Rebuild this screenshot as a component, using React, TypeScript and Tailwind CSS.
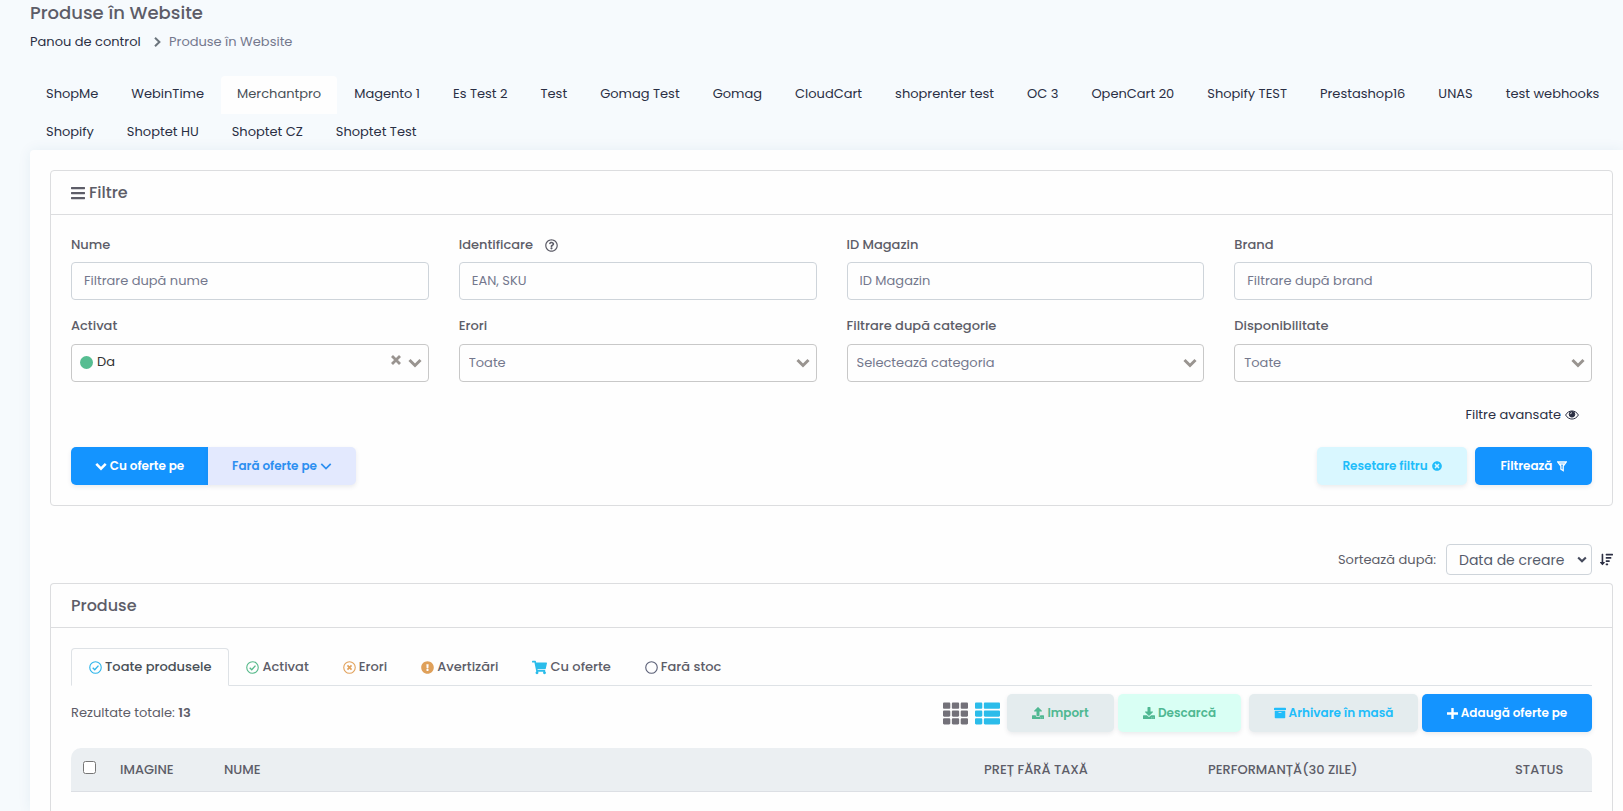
import type { ReactNode } from 'react';
import { FaBars, FaDownload, FaRegQuestionCircle, FaShoppingCart, FaSortAmountDown, FaTh, FaThList, FaUpload, FaArchive, FaTimesCircle, FaExclamationCircle } from 'react-icons/fa';

const shops = [
  'ShopMe', 'WebinTime', 'Merchantpro', 'Magento 1', 'Es Test 2', 'Test', 'Gomag Test', 'Gomag', 'CloudCart', 'shoprenter test',
  'OC 3', 'OpenCart 20', 'Shopify TEST', 'Prestashop16', 'UNAS', 'test webhooks', 'Shopify', 'Shoptet HU', 'Shoptet CZ', 'Shoptet Test',
];
const activeShop = 'Merchantpro';

const textFilters = [
  { id: 'name', label: 'Nume', placeholder: 'Filtrare după nume' },
  { id: 'identifier', label: 'Identificare', placeholder: 'EAN, SKU', help: true },
  { id: 'shop-id', label: 'ID Magazin', placeholder: 'ID Magazin' },
  { id: 'brand', label: 'Brand', placeholder: 'Filtrare după brand' },
];

const selectFilters = [
  { id: 'active', label: 'Activat', value: 'Da', selected: true },
  { id: 'errors', label: 'Erori', value: 'Toate' },
  { id: 'category', label: 'Filtrare după categorie', value: 'Selectează categoria' },
  { id: 'availability', label: 'Disponibilitate', value: 'Toate' },
];

function RingIcon({ className, children }: { className: string; children?: ReactNode }) {
  return (
    <svg viewBox="0 0 14 14" fill="none" stroke="currentColor" strokeWidth="1.2" className={`size-[13px] shrink-0 ${className}`}>
      <circle cx="7" cy="7" r="6.2" />
      {children}
    </svg>
  );
}

const productTabs = [
  { label: 'Toate produsele', active: true, icon: <RingIcon className="text-[#2fb5ea]"><path d="M4 7.2 6.2 9.3 10.2 5" strokeWidth="1.5" /></RingIcon> },
  { label: 'Activat', icon: <RingIcon className="text-[#56b98a]"><path d="M4 7.2 6.2 9.3 10.2 5" strokeWidth="1.5" /></RingIcon> },
  { label: 'Erori', icon: <RingIcon className="text-[#e2a25c]"><path d="m4.8 4.8 4.4 4.4M9.2 4.8 4.8 9.2" strokeWidth="1.8" /></RingIcon> },
  { label: 'Avertizări', icon: <FaExclamationCircle className="size-[13px] shrink-0 text-[#dfa05a]" /> },
  { label: 'Cu oferte', icon: <FaShoppingCart className="size-[15px] shrink-0 text-[#2bbcea]" /> },
  { label: 'Fară stoc', icon: <RingIcon className="text-[#5a5f76]" /> },
];

function Chevron({ className }: { className: string }) {
  return (
    <svg viewBox="0 0 14 10" fill="none" stroke="currentColor" className={className}>
      <path d="m1.5 2 5.5 5.5L12.5 2" />
    </svg>
  );
}

function Card({ title, className = '', children }: { title: ReactNode; className?: string; children: ReactNode }) {
  return (
    <section className={`rounded-[4px] border border-[#dcdddf] ${className}`}>
      <h2 className="flex h-[44px] items-center gap-[3px] border-b border-[#dcdddf] px-5 text-base font-medium">{title}</h2>
      {children}
    </section>
  );
}

const button = 'flex h-[38px] items-center justify-center gap-[3px] text-[12px] font-semibold shadow-[0_2px_4px_rgba(60,70,90,0.1)]';

export default function App() {
  return (
    <div className="flex min-h-screen flex-col bg-[#f6fafd] pl-[30px] font-['Poppins','Inter',sans-serif] text-[13px] text-[#5d5d68]">
      <h1 className="h-[27px] text-[18px] leading-[26px] font-medium">Produse în Website</h1>
      <nav className="flex h-[29px] items-center">
        <a href="#" className="w-[111px] text-[#2c3044]">Panou de control</a>
        <svg viewBox="0 0 7 10" fill="none" stroke="currentColor" strokeWidth="2" className="mr-2 ml-[13px] h-[10px] w-[7px] text-[#6c757d]">
          <path d="m1 .8 4.400 4.200L1 9.200" />
        </svg>
        <span className="text-[#74788d]">Produse în Website</span>
      </nav>

      <ul className="-mb-0.5 flex flex-wrap gap-x-px pt-5">
        {shops.map((name) => (
          <li key={name}>
            <a href="#" className={`flex h-[38px] items-center px-4 pb-0.5 leading-5 whitespace-nowrap ${name === activeShop ? 'rounded-t-[4px] bg-[#fefefe] text-[#495057]' : 'text-[#2a2f44]'}`}>{name}</a>
          </li>
        ))}
      </ul>

      <main className="flex grow flex-col rounded-tl-[4px] bg-[#fefefe] pt-5 pr-[10px] pl-5 shadow-[0_0_14px_rgba(18,90,130,0.07)]">
        <Card title={<><FaBars className="-ml-px size-4" /> Filtre</>}>
          <form className="px-5 pb-5" onSubmit={(e) => e.preventDefault()}>
            <div className="grid grid-cols-4 gap-x-[30px]">
              {textFilters.map((f) => (
                <div key={f.id} className="pt-5">
                  <label htmlFor={f.id} className="flex h-5 items-center gap-3 font-medium">
                    {f.label}
                    {f.help && <FaRegQuestionCircle className="size-[13px]" />}
                  </label>
                  <input id={f.id} placeholder={f.placeholder} className="mt-[7px] h-[38px] w-full rounded-[4px] border border-[#ced4da] px-3 placeholder:text-[#74788d]" />
                </div>
              ))}
              {selectFilters.map((f) => (
                <div key={f.id} className="pt-4">
                  <label htmlFor={f.id} className="flex h-5 items-center font-medium">{f.label}</label>
                  <div className="relative mt-2">
                    <select id={f.id} className={`h-[38px] w-full appearance-none rounded-[4px] border border-[#c8c8c8] pr-12 ${f.selected ? 'pb-0.5 pl-[25px] text-[#333]' : 'pl-[9px] text-[#74788d]'}`}>
                      <option>{f.value}</option>
                    </select>
                    {f.selected && <span className="absolute top-3 left-[9px] size-[13px] rounded-full bg-[#56bd91]" />}
                    {f.selected && (
                      <button type="button" aria-label="Șterge" className="absolute top-[11px] right-7 text-[#999490]">
                        <svg viewBox="0 0 10 10" stroke="currentColor" strokeWidth="2.8" className="size-[10px]"><path d="m1 1 8 8M9 1 1 9" /></svg>
                      </button>
                    )}
                    <Chevron className="pointer-events-none absolute top-[14px] right-[7px] h-[10px] w-[14px] stroke-3 text-[#999490]" />
                  </div>
                </div>
              ))}
            </div>

            <div className="mt-[23px] flex justify-end pr-[13px]">
              <a href="#" className="flex h-5 items-center gap-1 text-[#2c3044]">
                Filtre avansate
                <svg viewBox="0 0 14 10" className="h-[10px] w-[14px]" fill="none" stroke="currentColor">
                  <path d="M.6 5C3.600-.4 10.400-.4 13.400 5 10.400 10.400 3.600 10.400.6 5Z" />
                  <circle cx="7" cy="4.300" r="2.800" fill="currentColor" />
                  <path d="M5.400 4.200Q5.500 2.800 7 2.700" stroke="white" strokeWidth=".8" />
                </svg>
              </a>
            </div>

            <div className="mt-[22px] flex justify-between">
              <div className="flex">
                <button type="button" className={`${button} w-[137px] rounded-l-[5px] bg-[#1494ff] text-white`}>
                  <Chevron className="h-[9px] w-3 stroke-3" /> Cu oferte pe
                </button>
                <button type="button" className={`${button} w-[148px] rounded-r-[5px] bg-[#e3e9fe] text-[#2d8ff0]`}>
                  Fară oferte pe <Chevron className="h-[9px] w-3 stroke-2" />
                </button>
              </div>
              <div className="flex gap-2">
                <button type="reset" className={`${button} w-[150px] rounded-[5px] bg-[#d9f7ff] text-[#21bdfa]`}>
                  Resetare filtru <FaTimesCircle className="ml-px size-[10px]" />
                </button>
                <button type="submit" className={`${button} w-[117px] rounded-[5px] bg-[#1494ff] text-white`}>
                  Filtrează
                  <svg viewBox="0 0 10 11" fill="none" stroke="currentColor" strokeWidth="1.300" className="ml-px h-[11px] w-[10px]"><path d="M.8 1h8.400L6.200 5v4.600L3.900 8.200V5ZM3 3h4" /></svg>
                </button>
              </div>
            </div>
          </form>
        </Card>

        <div className="mt-[38px] flex items-center justify-end">
          <label htmlFor="sort" className="mr-[10px]">Sortează după:</label>
          <div className="relative mr-2">
            <select id="sort" className="h-[31px] w-[146px] appearance-none rounded-[4px] border border-[#ced4da] pt-0.5 pl-3 text-[14px] text-[#555b6b]">
              <option>Data de creare</option>
            </select>
            <Chevron className="pointer-events-none absolute top-3 right-[5px] h-[7px] w-[10px] stroke-3 text-[#454a5c]" />
          </div>
          <button type="button" aria-label="Ordine" className="text-[#2c3044]"><FaSortAmountDown className="size-[13px]" /></button>
        </div>

        <Card title="Produse" className="mt-2 grow rounded-b-none border-b-0">
          <div className="px-5 pt-5">
            <ul className="flex border-b border-[#dee2e6]">
              {productTabs.map((t) => (
                <li key={t.label}>
                  <button type="button" className={`-mb-px flex h-[38px] items-center gap-[3px] rounded-t-[4px] border font-medium whitespace-nowrap ${t.active ? 'border-[#dee2e6] border-b-[#fefefe] bg-[#fefefe] px-[17px] text-[#495057]' : 'border-transparent px-4'}`}>
                    {t.icon} {t.label}
                  </button>
                </li>
              ))}
            </ul>

            <div className="mt-2 flex items-center">
              <p className="grow">Rezultate totale: <strong className="font-semibold">13</strong></p>
              <button type="button" aria-label="Grilă" className="mr-[7px] text-[#737179]"><FaTh className="size-[25px]" /></button>
              <button type="button" aria-label="Listă" className="mr-[7px] text-[#2bbcea]"><FaThList className="size-[25px]" /></button>
              <button type="button" className={`${button} mr-1 w-[107px] rounded-[5px] bg-[#e4ecee] text-[#4fb892]`}><FaUpload className="size-3" /> Import</button>
              <button type="button" className={`${button} mr-2 w-[123px] rounded-[5px] bg-[#d9fff4] text-[#4fb892]`}><FaDownload className="size-3" /> Descarcă</button>
              <button type="button" className={`${button} mr-1 w-[169px] rounded-[5px] bg-[#e4ecee] text-[#21bdfa]`}><FaArchive className="size-3" /> Arhivare în masă</button>
              <button type="button" className={`${button} w-[170px] rounded-[5px] bg-[#1494ff] text-white`}>
                <svg viewBox="0 0 11 11" stroke="currentColor" strokeWidth="2.400" className="size-[11px]"><path d="M5.500 0v11M0 5.500h11" /></svg> Adaugă oferte pe
              </button>
            </div>

            <table className="mt-4 w-full table-fixed text-left">
              <thead>
                <tr className="h-[43px] bg-[#ebeff2] [&>th]:border-b [&>th]:border-[#dcdfe4] [&>th]:px-3 [&>th]:font-medium">
                  <th className="w-[37px] rounded-tl-[10px]"><input type="checkbox" aria-label="Selectează toate" className="mb-1 block size-[13px]" /></th>
                  <th className="w-[104px]">IMAGINE</th>
                  <th>NUME</th>
                  <th className="w-[224px]">PREȚ FĂRĂ TAXĂ</th>
                  <th className="w-[307px]">PERFORMANȚĂ(30 ZILE)</th>
                  <th className="w-[89px] rounded-tr-[10px]">STATUS</th>
                </tr>
              </thead>
            </table>
          </div>
        </Card>
      </main>
    </div>
  );
}
